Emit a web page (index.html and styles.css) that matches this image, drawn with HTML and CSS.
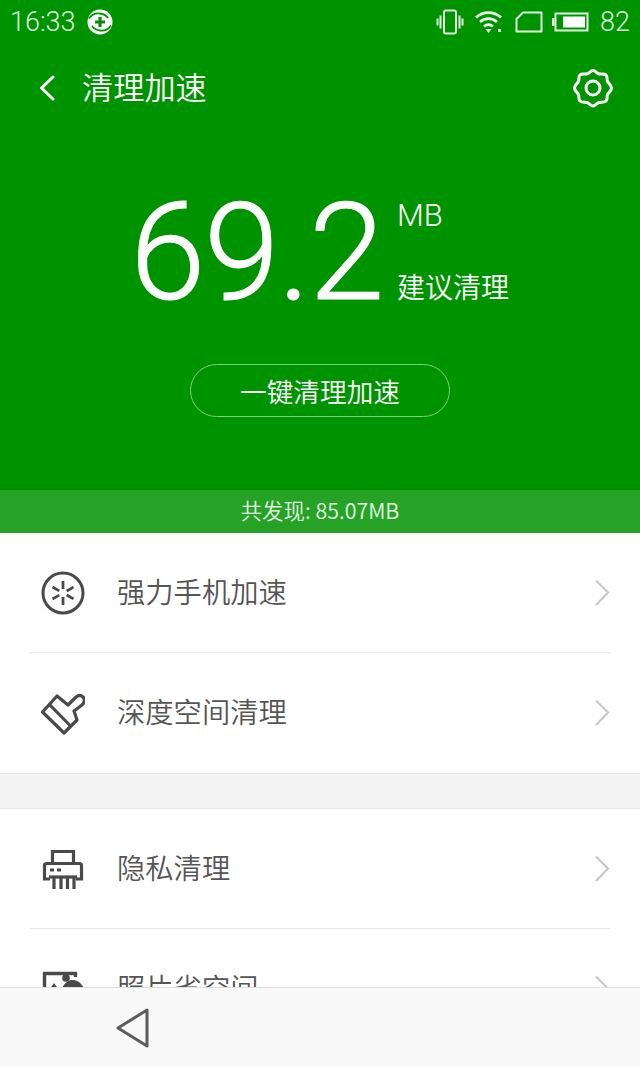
FILE: index.html
```html
<!DOCTYPE html>
<html lang="zh-CN">
<head>
<meta charset="utf-8">
<title>清理加速</title>
<link rel="stylesheet" href="styles.css">
</head>
<body>
<div class="phone">
  <div class="content">
    <section class="hero">
      <div class="status">
        <div class="status-left">
          <span class="time">16:33</span>
          <svg class="ico-app" viewBox="0 0 26 26"><circle cx="13" cy="13" r="12.500" fill="#fff"/><path d="M2 9.500C5 5 9 4 13 4.500c3 .3 6 1.800 8 4.500M24 16.500C21 21 17 22 13 21.500c-3-.3-6-1.800-8-4.500" fill="none" stroke="#009300" stroke-width="1.800"/><path d="M13 8v10M8 13h10" stroke="#0a8a0a" stroke-width="3.200"/></svg>
        </div>
        <div class="status-right">
          <svg class="ico-vib" viewBox="0 0 28 26" fill="none" stroke="#e4f6e4" stroke-width="2"><rect x="8" y="1.500" width="12" height="23" rx="2"/><path d="M4.500 6.500v13M1.500 9.500v7M23.500 6.500v13M26.500 9.500v7"/></svg>
          <svg class="ico-wifi" viewBox="0 0 28 24"><path d="M1 7.500C8 1 19 1 26 7.500M5 12c5-4.500 12-4.500 17 0M9 16.500c3-2.500 6-2.500 9 0" fill="none" stroke="#e8f8e8" stroke-width="2.600"/><path d="M10.500 19h6l-3 4z" fill="#e8f8e8"/><rect x="23" y="19" width="3" height="3" fill="#e8f8e8"/></svg>
          <svg class="ico-sim" viewBox="0 0 28 22" fill="none" stroke="#e4f6e4" stroke-width="2" stroke-linejoin="round"><path d="M8 1.500h18.500v19H1.500V8z"/></svg>
          <svg class="ico-bat" viewBox="0 0 37 20"><rect x="3.500" y="1.500" width="32" height="17" fill="none" stroke="#e4f6e4" stroke-width="2"/><rect x="0" y="6" width="2.500" height="8" fill="#e4f6e4"/><rect x="11" y="4.500" width="22" height="11" fill="#fff"/></svg>
          <span class="battery">82</span>
        </div>
      </div>
      <div class="titlebar">
        <svg class="ico-back" viewBox="0 0 18 26" fill="none" stroke="#fff" stroke-width="3" stroke-linecap="round" stroke-linejoin="round"><path d="M15 2 3.500 13 15 24"/></svg>
        <h1 class="title">清理加速</h1>
        <svg class="ico-gear" viewBox="0 0 40 40" fill="none" stroke="#fff" stroke-width="3"><path d="M20 2.500c2.500 0 3.500 3 6 3.500s5-1 7 1 .5 4.500 1.500 6.500 4 3.500 4 6.500-3 4.500-4 6.500.5 4.500-1.500 6.500-4.500 1-7 1.500-3.500 3.500-6 3.500-3.500-3-6-3.500-5 .5-7-1.500-.5-4.500-1.500-6.500-4-3.500-4-6.500 3-4.500 4-6.500-.5-4.500 1.500-6.500 4.500-.5 7-1S17.500 2.500 20 2.500z"/><circle cx="20" cy="20" r="7"/></svg>
      </div>
      <div class="reading">
        <span class="amount">69.2</span>
        <div class="reading-side">
          <span class="unit">MB</span>
          <span class="advice">建议清理</span>
        </div>
      </div>
      <button class="clean-btn">一键清理加速</button>
    </section>
    <div class="found">共发现: 85.07MB</div>
    <ul class="group">
      <li class="row">
        <svg class="row-ico" viewBox="0 0 44 44" fill="none" stroke="#4a4a4a" stroke-width="3"><circle cx="22" cy="22" r="20"/><path d="M22 10v8M22 26v8M11.500 16l6.800 3.900M25.700 24l6.800 3.900M11.500 28l6.800-3.900M25.700 20l6.800-3.900" stroke-width="2.800"/></svg>
        <span class="row-label">强力手机加速</span>
        <svg class="chevron" viewBox="0 0 16 28" fill="none" stroke="#c8c8c8" stroke-width="2.200"><path d="M2 1.500 14 13.500 2 26"/></svg>
      </li>
      <li class="row">
        <svg class="row-ico" viewBox="0 0 44 44" fill="none" stroke="#4a4a4a" stroke-width="3.200" stroke-linejoin="round"><path d="M1.500 21 16 5l11 9 7-7c3-3 6-3 8-1s2 5-1 8l-8 6 3 9-13 13z"/><path d="M8.500 13.500 30 35.500"/></svg>
        <span class="row-label">深度空间清理</span>
        <svg class="chevron" viewBox="0 0 16 28" fill="none" stroke="#c8c8c8" stroke-width="2.200"><path d="M2 1.500 14 13.500 2 26"/></svg>
      </li>
    </ul>
    <div class="spacer"></div>
    <ul class="group">
      <li class="row">
        <svg class="row-ico" viewBox="0 0 44 44" fill="none" stroke="#4a4a4a" stroke-width="3.200"><path d="M11.500 17V4.500h21V17"/><path d="M9 32H3.500V18.500q0-2 2-2h33q2 0 2 2V32H35"/><path d="M8 30h28"/><path d="M13 30v12M20 30v12M26.500 30v12M33 30v12" stroke-width="3.200"/><path d="M9 23h4M16 23h4" stroke-width="2.800"/></svg>
        <span class="row-label">隐私清理</span>
        <svg class="chevron" viewBox="0 0 16 28" fill="none" stroke="#c8c8c8" stroke-width="2.200"><path d="M2 1.500 14 13.500 2 26"/></svg>
      </li>
      <li class="row">
        <svg class="row-ico" viewBox="0 0 44 44" fill="none" stroke="#4a4a4a" stroke-width="3.400"><path d="M3.500 30V6.500h31V10"/><path d="M8 23l5-7 5 7z" fill="#4a4a4a" stroke="none"/><circle cx="25" cy="11" r="3.800" fill="#4a4a4a" stroke="none"/><path d="M21 21c3-6 7-8 11-8s8 3 11 8v20H21z" fill="#4a4a4a" stroke="none"/></svg>
        <span class="row-label">照片省空间</span>
        <svg class="chevron" viewBox="0 0 16 28" fill="none" stroke="#c8c8c8" stroke-width="2.200"><path d="M2 1.500 14 13.500 2 26"/></svg>
      </li>
    </ul>
  </div>
  <nav class="navbar">
    <svg class="nav-back" viewBox="0 0 34 40" fill="none" stroke="#5c5c5c" stroke-width="3" stroke-linejoin="round"><path d="M31 2v36L2 20z"/></svg>
  </nav>
</div>
</body>
</html>
```

FILE: styles.css
```css
* { box-sizing: border-box; }
html, body { margin: 0; padding: 0; }
body {
  width: 640px;
  height: 1067px;
  overflow: hidden;
  background: #fff;
  font-family: "Noto Sans CJK SC", "Roboto", sans-serif;
  font-weight: 350;
}
.phone { display: flex; flex-direction: column; height: 1067px; }
.content { flex: 1; min-height: 0; overflow: hidden; }

.hero {
  height: 490px;
  background: #009300;
  color: #fff;
  display: flex;
  flex-direction: column;
  align-items: center;
}
.status {
  width: 100%;
  height: 44px;
  padding: 0 10px;
  display: flex;
  justify-content: space-between;
  align-items: center;
  color: #def5de;
  font-family: "Roboto", sans-serif;
  font-weight: 300;
  font-size: 27px;
}
.status-left, .status-right { display: flex; align-items: center; }
.ico-app { width: 26px; height: 26px; margin-left: 11px; }
.ico-vib { width: 28px; height: 26px; }
.ico-wifi { width: 28px; height: 24px; margin-left: 11px; }
.ico-sim { width: 28px; height: 22px; margin-left: 12px; }
.ico-bat { width: 37px; height: 20px; margin-left: 9px; }
.battery { margin-left: 11px; }

.titlebar {
  width: 100%;
  height: 88px;
  display: flex;
  align-items: center;
  padding: 0 27px 0 38px;
}
.ico-back { width: 18px; height: 26px; }
.title {
  margin: -4px 0 0 26px;
  flex: 1;
  font-size: 31.200px;
  font-weight: 350;
  line-height: 44px;
}
.ico-gear { width: 40px; height: 40px; }

.reading {
  margin-top: 46px;
  height: 150px;
  width: 100%;
  padding-left: 130px;
  display: flex;
  align-items: flex-start;
}
.amount {
  font-family: "Roboto", sans-serif;
  font-weight: 300;
  font-size: 136px;
  line-height: 150px;
  letter-spacing: -1.500px;
  -webkit-text-stroke: 1px #fff;
  width: 267px;
}
.reading-side { display: flex; flex-direction: column; }
.unit {
  font-family: "Roboto", sans-serif;
  font-weight: 300;
  font-size: 31px;
  line-height: 36px;
  margin-top: 20px;
}
.advice { font-size: 28px; line-height: 40px; margin-top: 32px; }

.clean-btn {
  margin-top: 36px;
  width: 260px;
  height: 53px;
  border: 1.500px solid #7fcf7f;
  border-radius: 27px;
  background: transparent;
  color: #fff;
  font-family: inherit;
  font-weight: 350;
  font-size: 26.670px;
  padding: 0;
}

.found {
  height: 43px;
  background: #26a326;
  color: #e4f6e4;
  text-align: center;
  font-size: 21.400px;
  line-height: 40px;
}

.group { list-style: none; margin: 0; padding: 0; }
.row {
  height: 120px;
  margin: 0 30px;
  display: flex;
  align-items: center;
  border-bottom: 1px solid #e8e8e8;
}
.group .row:last-child { border-bottom: none; }
.row-ico { width: 44px; height: 44px; margin-left: 11px; flex: none; }
.row-label {
  flex: 1;
  margin-left: 32px;
  margin-top: -5px;
  font-size: 28.300px;
  color: #555;
}
.chevron { width: 16px; height: 28px; flex: none; }

.spacer {
  height: 36px;
  background: #f4f4f4;
  border-top: 1px solid #e8e8e8;
  border-bottom: 1px solid #e8e8e8;
}

.navbar {
  height: 80px;
  flex: none;
  background: #f9f9f9;
  border-top: 1px solid #dedede;
  display: flex;
  align-items: center;
  padding-left: 116px;
}
.nav-back { width: 34px; height: 40px; }
```
